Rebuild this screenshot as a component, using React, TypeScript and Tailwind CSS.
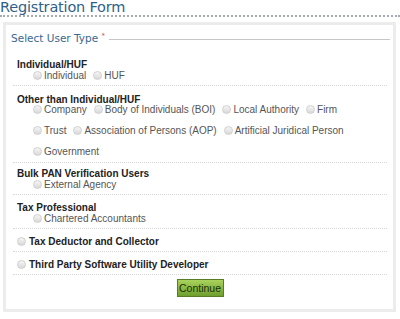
import React from "react";

const Dot = () => (
  <span className="inline-block size-[9px] shrink-0 rounded-full border border-[#cfcfcf] bg-gradient-to-b from-[#f6f6f6] to-[#d9d9d9]" />
);

const Radio = ({ label }: { label: string }) => (
  <span className="inline-flex items-center gap-[2px] whitespace-nowrap">
    <Dot />
    <span>{label}</span>
  </span>
);

const Row = ({ children }: { children: React.ReactNode }) => (
  <div className="flex h-[11px] items-center gap-[7px] whitespace-nowrap pl-[16px] text-[10px] text-[#555]">
    {children}
  </div>
);

const Group = ({
  title,
  top = "pt-[8px]",
  children,
}: {
  title: string;
  top?: string;
  children: React.ReactNode;
}) => (
  <div className={`border-b border-dotted border-[#d6d6d6] pb-[4px] pl-[4px] ${top}`}>
    <div className="text-[10px] font-bold leading-[11px] text-[#222]">{title}</div>
    {children}
  </div>
);

const Single = ({ label }: { label: string }) => (
  <div className="flex h-[23px] items-center gap-[3px] border-b border-dotted border-[#d6d6d6] pl-[4px] pt-[2px] text-[10px] font-bold text-[#222]">
    <Dot />
    {label}
  </div>
);

export default function App() {
  return (
    <div className="h-[319px] w-[400px] overflow-hidden bg-white font-['Liberation_Sans',Arial,sans-serif]">
      <div className="h-[17px] border-b-2 border-dotted border-[#a3acb5] font-['DejaVu_Sans',sans-serif] text-[14.5px] leading-[15px] tracking-[-0.2px] text-[#2f5f8a]">
        Registration Form
      </div>
      <div className="ml-[3px] mr-[4px] mt-[5px] h-[290px] border-[3px] border-[#ececec] bg-white pl-[4px] pr-[3px]">
        <div className="flex h-[26px] items-center gap-[4px] pl-[1px] pt-[2px]">
          <span className="whitespace-nowrap font-['DejaVu_Sans',sans-serif] text-[10.5px] text-[#3a6890]">
            Select User Type <span className="align-top text-[7px] text-[#e04a4a]">*</span>
          </span>
          <span className="h-px flex-1 bg-[#c6c6c6]" />
        </div>
        <div className="pl-[3px] pr-[3px]">
          <Group title="Individual/HUF">
            <Row>
              <Radio label="Individual" />
              <Radio label="HUF" />
            </Row>
          </Group>
          <Group title="Other than Individual/HUF">
            <div className="-mt-[1px] flex flex-col gap-[10px] pb-[1px]">
              <Row>
                <Radio label="Company" />
                <Radio label="Body of Individuals (BOI)" />
                <Radio label="Local Authority" />
                <Radio label="Firm" />
              </Row>
              <Row>
                <Radio label="Trust" />
                <Radio label="Association of Persons (AOP)" />
                <Radio label="Artificial Juridical Person" />
              </Row>
              <Row>
                <Radio label="Government" />
              </Row>
            </div>
          </Group>
          <Group title="Bulk PAN Verification Users" top="pt-[5px]">
            <Row>
              <Radio label="External Agency" />
            </Row>
          </Group>
          <Group title="Tax Professional" top="pt-[7px]">
            <Row>
              <Radio label="Chartered Accountants" />
            </Row>
          </Group>
          <Single label="Tax Deductor and Collector" />
          <Single label="Third Party Software Utility Developer" />
          <div className="flex justify-center pt-[4px]">
            <button className="h-[18px] w-[47px] border border-[#587d22] bg-gradient-to-b from-[#a9d35c] to-[#6e9f2c] text-[10.5px] leading-[14px] text-[#1c3005]">
              Continue
            </button>
          </div>
        </div>
      </div>
    </div>
  );
}
